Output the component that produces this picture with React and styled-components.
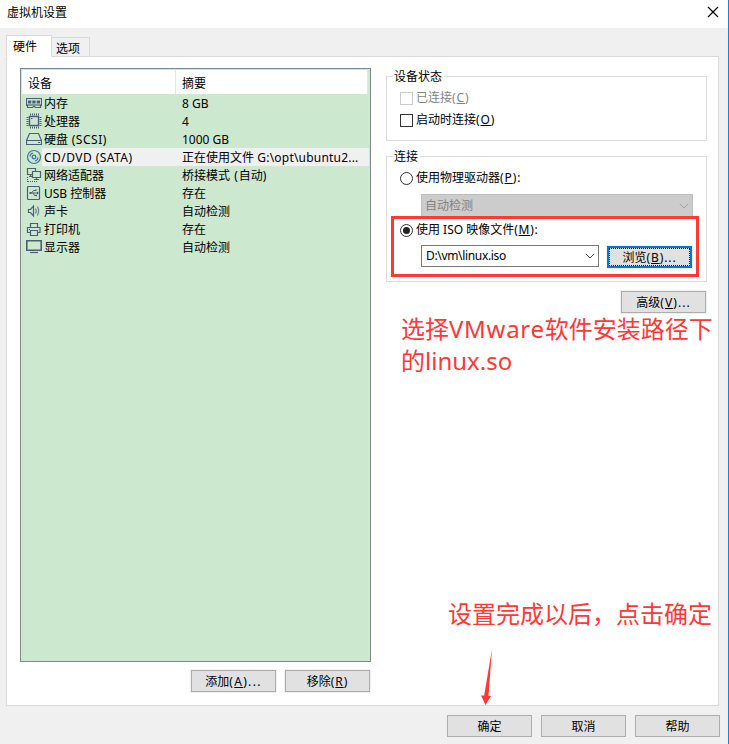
import React from 'react';
import styled, { createGlobalStyle, css } from 'styled-components';

const GlobalStyle = createGlobalStyle`
  * {
    box-sizing: border-box;
  }

  body {
    margin: 0;
    overflow: hidden;
    background: #f0f0f0;
    color: #000;
    font-family: 'Noto Sans', 'Noto Sans CJK SC', sans-serif;
    font-size: 12px;
    line-height: 18px;
  }

  button {
    font: inherit;
    color: inherit;
  }
`;

const Dialog = styled.div`
  position: relative;
  display: flex;
  flex-direction: column;
  width: 729px;
  height: 744px;
  border-right: 1px solid #1883d7;
  background: #f0f0f0;
  white-space: nowrap;
`;

const TitleBar = styled.header`
  display: flex;
  flex: none;
  align-items: center;
  justify-content: space-between;
  height: 28px;
  padding: 0 9px 3px 7px;
  background: #fff;
`;

const CloseIcon = styled.svg`
  width: 12px;
  height: 12px;
  margin-top: -1px;
  fill: none;
  stroke: #000;
  stroke-width: 1.2;
`;

const TabBar = styled.nav`
  display: flex;
  flex: none;
  align-items: flex-end;
  height: 29px;
  padding-left: 6px;
  z-index: 1;
`;

const Tab = styled.div`
  width: ${({ $active }) => ($active ? 46 : 38)}px;
  height: ${({ $active }) => ($active ? 22 : 20)}px;
  padding-left: ${({ $active }) => ($active ? 6 : 4)}px;
  border: 1px solid #d9d9d9;
  border-left-width: ${({ $active }) => ($active ? 1 : 0)}px;
  border-bottom-color: ${({ $active }) => ($active ? '#fff' : '#d9d9d9')};
  background: ${({ $active }) => ($active ? '#fff' : '#f0f0f0')};
  line-height: 21px;
`;

const Pane = styled.main`
  display: flex;
  flex: none;
  gap: 15px;
  width: 713px;
  height: 650px;
  margin: -1px 0 0 6px;
  padding: 11px 11px 0 13px;
  border: 1px solid #d9d9d9;
  background: #fff;
`;

const Devices = styled.section`
  display: flex;
  flex: none;
  flex-direction: column;
  width: 351px;
`;

const DeviceList = styled.div`
  height: 594px;
  padding: 1px;
  border: 1px solid #828790;
  background: #cce8cf;
`;

const ListHeader = styled.div`
  display: flex;
  height: 24px;
  margin-right: 1px;
  background: #fff;
  line-height: 27px;
`;

const HeaderCell = styled.div`
  width: ${({ $width }) => $width};
  padding-left: 6px;
  border-right: 1px solid #e5e5e5;
`;

const Row = styled.div`
  display: flex;
  height: 18px;
  line-height: 20px;
`;

const RowIcon = styled.svg`
  flex: none;
  width: 16px;
  height: 16px;
  margin: 1px 0 0 4px;
  fill: none;
  stroke: #4a6072;
  stroke-width: 1.2;
`;

const RowBody = styled.div`
  display: flex;
  flex: 1;
  padding-left: 2px;
  background: ${({ $selected }) => ($selected ? '#f0f0f0' : 'transparent')};
`;

const Name = styled.span`
  width: 138px;
`;

const Latin = styled.span`
  letter-spacing: ${({ $spacing }) => $spacing}px;
`;

const ButtonRow = styled.div`
  display: flex;
  justify-content: flex-end;
  gap: 9px;
  padding: ${({ $footer }) => ($footer ? '9px 8px 0 0' : '8px 1px 0 0')};
`;

const Button = styled.button`
  width: 85px;
  height: 22px;
  padding: 1px 0 0;
  border: 1px solid #adadad;
  background: #e1e1e1;
  box-shadow: 0 0 0 1px #f0f0f0;
  line-height: 20px;

  ${({ $focused }) =>
    $focused &&
    css`
      border: 2px solid #0078d7;
      outline: 1px dotted #000;
      outline-offset: -3px;
      line-height: 18px;
    `}
`;

const Settings = styled.section`
  flex: none;
  width: 321px;
`;

const Group = styled.fieldset`
  height: ${({ $height }) => $height}px;
  margin: 0;
  padding: 2px 13px 0;
  border: 1px solid #dcdcdc;

  legend {
    height: 18px;
    margin-left: -7px;
    padding: 0 2px 0 1px;
    line-height: 20px;
  }
`;

const StatusGroup = styled(Group)`
  margin-top: -1px;
`;

const ConnectionGroup = styled(Group)`
  margin-top: 6px;
`;

const Option = styled.label`
  display: flex;
  align-items: center;
  gap: 3px;
  height: ${({ $height }) => $height || 22}px;
  color: ${({ $disabled }) => ($disabled ? '#838383' : '#000')};
`;

const Checkbox = styled.span`
  width: 13px;
  height: 13px;
  border: 1px solid ${({ $disabled }) => ($disabled ? '#ccc' : '#333')};
  background: #fff;
`;

const Radio = styled.span`
  display: grid;
  place-items: center;
  width: 13px;
  height: 13px;
  border: 1px solid #333;
  border-radius: 50%;

  &::after {
    content: '';
    width: 7px;
    height: 7px;
    border-radius: 50%;
    background: ${({ $checked }) => ($checked ? '#222' : 'transparent')};
  }
`;

const Select = styled.div`
  display: flex;
  align-items: center;
  justify-content: space-between;
  width: ${({ $width }) => $width}px;
  height: ${({ $disabled }) => ($disabled ? 23 : 22)}px;
  padding: 0 3px 0 ${({ $disabled }) => ($disabled ? 3 : 4)}px;
  border: 1px solid ${({ $disabled }) => ($disabled ? '#bfbfbf' : '#7a7a7a')};
  background: ${({ $disabled }) => ($disabled ? '#ccc' : '#fff')};
  color: ${({ $disabled }) => ($disabled ? '#838383' : '#000')};
`;

const Chevron = styled.svg`
  width: 10px;
  height: 6px;
  fill: none;
  stroke: ${({ $disabled }) => ($disabled ? '#a0a0a0' : '#444')};
`;

const SelectRow = styled.div`
  display: flex;
  gap: 8px;
  margin: ${({ $top }) => $top}px 0 0 21px;

  ${Button} {
    margin-top: 1px;
  }
`;

const AdvancedRow = styled.div`
  display: flex;
  justify-content: flex-end;
  padding: 9px 1px 0 0;
`;

// red marks drawn over the dialog
const Highlight = styled.div`
  position: absolute;
  top: 216px;
  left: 391px;
  width: 308px;
  height: 61px;
  border: 3px solid #ff3838;
`;

const Note = styled.p`
  position: absolute;
  top: ${({ $top }) => $top}px;
  left: ${({ $left }) => $left}px;
  margin: 0;
  color: #ff3838;
  font-size: 24px;
  line-height: 32px;
`;

const Arrow = styled.svg`
  position: absolute;
  top: 648px;
  left: 480px;
  width: 13px;
  height: 57px;
  fill: #ff3838;
`;

const icons = {
  memory: (
    <>
      <path d="M.5 3.500h15v7h-1v2H9.500l-1-1h-1l-1 1H1.500v-2h-1z" />
      <path d="M2 5.500h3.300v3H2zM6.300 5.500h3.300v3H6.300zM10.700 5.500H14v3h-3.300z" fill="#4a6072" stroke="none" />
      <path d="M1 10h14" />
    </>
  ),
  cpu: (
    <>
      <rect x="3.500" y="3.500" width="9" height="9" strokeWidth="1.400" />
      <path d="M4 1.500h9M4 14.500h9" strokeWidth="2" strokeDasharray="1 1" />
      <path d="M1.500 4v9M14.500 4v9" strokeWidth="2" strokeDasharray="1 1" />
      <path d="M5 5.500h1.500" />
    </>
  ),
  disk: (
    <>
      <path d="M3.500 2.500h9l3 7H.5z" />
      <path d="M.5 9.500h15v4H.5z" />
      <path d="M12 11.500h2" />
    </>
  ),
  cd: (
    <>
      <circle cx="8" cy="8" r="6.500" stroke="#3f7397" />
      <circle cx="8" cy="8" r="1.800" stroke="#3f7397" strokeWidth="1.300" />
      <path d="M4 7.500a4 4 0 0 1 3-3.500M12 8.500a4 4 0 0 1-3 3.500" stroke="#3f7397" />
    </>
  ),
  network: (
    <>
      <path d="M6.500 7.500h-5v-6h8v3M3 9.500h3M4.500 7.500v2" />
      <path d="M6.500 4.500h8v6h-8zM10.500 10.500v2M8 12.500h5" />
      <path d="M1.500 10v5M2 14.500h9" strokeDasharray="1 1" />
    </>
  ),
  usb: (
    <>
      <rect x="1.500" y="1.500" width="12" height="13" rx="1" />
      <path d="M4 8h8M5.500 8l2-2.500h2M7 8l1.500 2.500H10" strokeWidth="1" />
      <path
        d="M3.500 7h2v2h-2zM9 4.500h1.500v1.500H9zM9.500 9.800H11v1.500H9.500zM11 6.500 13 8l-2 1.500z"
        fill="#4a6072"
        stroke="none"
      />
    </>
  ),
  sound: (
    <>
      <path d="M2.500 6.500h2l3-3.500v10l-3-3.500h-2z" />
      <path d="M9.500 5.500c1 1.500 1 3.500 0 5M11.500 3.500c1.500 3 1.500 6 0 9" opacity=".75" />
    </>
  ),
  printer: (
    <>
      <path d="M4.500 6.500v-4h7v4M4.500 11.500h-3v-5h12.500v5h-3" />
      <path d="M4.500 9.500h7v5h-7zM3 8.500h1" />
    </>
  ),
  display: (
    <>
      <path d="M.8 1.800h14.400v9.400H.8z" strokeWidth="1.600" />
      <path d="M4 13.500h8" />
    </>
  ),
};

const devices = [
  { icon: 'memory', name: '内存', summary: '8 GB' },
  { icon: 'cpu', name: '处理器', summary: '4' },
  { icon: 'disk', name: '硬盘 (SCSI)', summary: '1000 GB', spacing: 0.55 },
  {
    icon: 'cd',
    name: 'CD/DVD (SATA)',
    summary: '正在使用文件 G:\\opt\\ubuntu2...',
    spacing: 0.45,
    summarySpacing: 0.2,
    selected: true,
  },
  { icon: 'network', name: '网络适配器', summary: '桥接模式 (自动)', summarySpacing: 1 },
  { icon: 'usb', name: 'USB 控制器', summary: '存在' },
  { icon: 'sound', name: '声卡', summary: '自动检测' },
  { icon: 'printer', name: '打印机', summary: '存在' },
  { icon: 'display', name: '显示器', summary: '自动检测' },
];

// spaces out only the latin runs, the CJK glyphs keep their 12px pitch
const Spaced = ({ text, spacing = 0 }) =>
  text.split(/([\x20-\x7e]+)/).map((part, i) =>
    i % 2 ? (
      <Latin key={i} $spacing={spacing}>
        {part}
      </Latin>
    ) : (
      part
    ),
  );

const Mnemonic = ({ letter, tail = '', spacing = 0.9 }) => (
  <Latin $spacing={spacing}>
    (<u>{letter}</u>){tail}
  </Latin>
);

const DropArrow = ({ disabled }) => (
  <Chevron $disabled={disabled} viewBox="0 0 10 6">
    <path d="M.8.8 5 5 9.200.8" />
  </Chevron>
);

const App = () => (
  <Dialog>
    <GlobalStyle />
    <TitleBar>
      <span>虚拟机设置</span>
      <CloseIcon viewBox="0 0 12 12">
        <path d="M1 1l10 10M11 1L1 11" />
      </CloseIcon>
    </TitleBar>
    <TabBar>
      <Tab $active>硬件</Tab>
      <Tab>选项</Tab>
    </TabBar>
    <Pane>
      <Devices>
        <DeviceList>
          <ListHeader>
            <HeaderCell $width="154px">设备</HeaderCell>
            <HeaderCell $width="192px">摘要</HeaderCell>
          </ListHeader>
          {devices.map(({ icon, name, summary, spacing, summarySpacing, selected }) => (
            <Row key={name}>
              <RowIcon viewBox="0 0 16 16">{icons[icon]}</RowIcon>
              <RowBody $selected={selected}>
                <Name>
                  <Spaced text={name} spacing={spacing} />
                </Name>
                <span>
                  <Spaced text={summary} spacing={summarySpacing} />
                </span>
              </RowBody>
            </Row>
          ))}
        </DeviceList>
        <ButtonRow>
          <Button>
            添加
            <Mnemonic letter="A" tail="..." spacing={1.3} />
          </Button>
          <Button>
            移除
            <Mnemonic letter="R" />
          </Button>
        </ButtonRow>
      </Devices>
      <Settings>
        <StatusGroup $height={74}>
          <legend>设备状态</legend>
          <Option $disabled>
            <Checkbox $disabled />
            <span>
              已连接
              <Mnemonic letter="C" />
            </span>
          </Option>
          <Option>
            <Checkbox />
            <span>
              启动时连接
              <Mnemonic letter="O" />
            </span>
          </Option>
        </StatusGroup>
        <ConnectionGroup $height={135}>
          <legend>连接</legend>
          <Option>
            <Radio />
            <span>
              使用物理驱动器
              <Mnemonic letter="P" tail=":" />
            </span>
          </Option>
          <SelectRow $top={5}>
            <Select $width={272} $disabled>
              自动检测
              <DropArrow disabled />
            </Select>
          </SelectRow>
          <Option $height={26}>
            <Radio $checked />
            <span>
              使用 ISO 映像文件
              <Mnemonic letter="M" tail=":" spacing={0.7} />
            </span>
          </Option>
          <SelectRow $top={2}>
            <Select $width={178}>
              <Latin $spacing={-0.33}>D:\vm\linux.iso</Latin>
              <DropArrow />
            </Select>
            <Button $focused>
              浏览
              <Mnemonic letter="B" tail="..." />
            </Button>
          </SelectRow>
        </ConnectionGroup>
        <AdvancedRow>
          <Button>
            高级
            <Mnemonic letter="V" tail="..." spacing={1.1} />
          </Button>
        </AdvancedRow>
      </Settings>
    </Pane>
    <ButtonRow $footer>
      <Button>确定</Button>
      <Button>取消</Button>
      <Button>帮助</Button>
    </ButtonRow>

    <Highlight />
    <Note $top={313} $left={401}>
      选择<Latin $spacing={0.7}>VMware</Latin>软件安装路径下
      <br />
      的linux.so
    </Note>
    <Note $top={598} $left={448}>
      设置完成以后，点击确定
    </Note>
    <Arrow viewBox="0 0 13 57">
      <path d="M12 1 8.500 48H11L5.500 57 1 47.500h3.200z" />
    </Arrow>
  </Dialog>
);

export default App;
